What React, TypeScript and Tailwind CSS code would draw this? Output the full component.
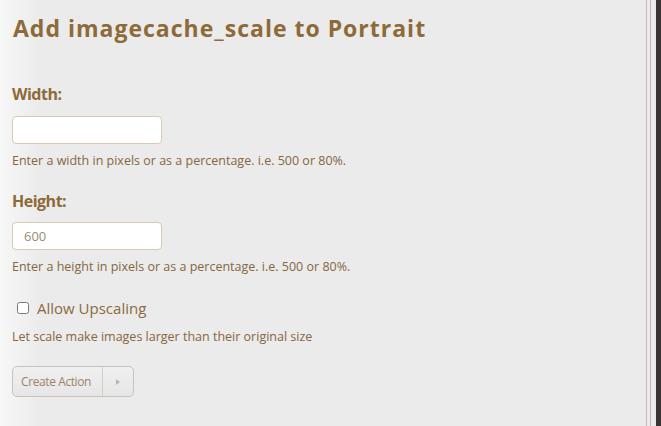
import React from "react";

export default function App() {
  return (
    <div className="relative w-[661px] h-[426px] overflow-hidden bg-[#ebebeb]" style={{ fontFamily: '"Open Sans", "DejaVu Sans", sans-serif' }}>
      <div className="absolute inset-y-0 left-0 w-[40px] bg-gradient-to-r from-[#f7f7f7] to-[#ebebeb]" />
      <div className="absolute inset-y-0 left-[646px] w-[1px] bg-[#c7b9b9]" />
      <div className="absolute inset-y-0 left-[650px] w-[1px] bg-[#c4b6b6]" />
      <div className="absolute inset-y-0 left-[656px] w-[5px] bg-[#3a3434]" />
      <div className="relative flex flex-col pl-[12px] pt-[13px]">
        <h1 className="text-[23px] font-bold leading-[30px] text-[#8d6a38] tracking-[1px] pl-[1px]">Add imagecache_scale to Portrait</h1>

        <label className="mt-[41px] text-[16px] font-bold leading-[21px] tracking-[-0.5px] text-[#8d6a38]">Width:</label>
        <input className="mt-[11px] w-[150px] h-[28px] rounded-[4px] border border-[#d8cab5] bg-white px-[11px] text-[13px] text-[#9a8a70] outline-none" />
        <p className="mt-[9px] text-[12.5px] leading-[16px] text-[#85673f]">Enter a width in pixels or as a percentage. i.e. 500 or 80%.</p>

        <label className="mt-[22px] text-[16px] font-bold leading-[21px] tracking-[-0.5px] text-[#8d6a38]">Height:</label>
        <input defaultValue="600" className="mt-[10px] w-[150px] h-[28px] rounded-[4px] border border-[#d8cab5] bg-white px-[11px] text-[13px] text-[#9a8a70] outline-none" />
        <p className="mt-[9px] text-[12.5px] leading-[16px] text-[#85673f]">Enter a height in pixels or as a percentage. i.e. 500 or 80%.</p>

        <label className="mt-[23px] flex items-center gap-[8px] pl-[5px]">
          <input type="checkbox" className="w-[12px] h-[12px] m-0" />
          <span className="text-[15px] leading-[20px] text-[#8a6a40]">Allow Upscaling</span>
        </label>
        <p className="mt-[11px] text-[12.5px] leading-[16px] text-[#85673f]">Let scale make images larger than their original size</p>

        <div className="mt-[21px] flex w-[122px] h-[31px] rounded-[5px] border border-[#c9c2b8] bg-gradient-to-b from-[#f0f0f0] to-[#e6e6e6] items-stretch">
          <span className="flex items-center pl-[8px] pr-[11px] text-[12px] tracking-[-0.4px] text-[#9b8466] border-r border-[#d4cdc4]">Create Action</span>
          <span className="flex flex-1 items-center justify-center">
            <span className="w-0 h-0 border-y-[3px] border-y-transparent border-l-[4px] border-l-[#bdb5a8]" />
          </span>
        </div>
      </div>
    </div>
  );
}
